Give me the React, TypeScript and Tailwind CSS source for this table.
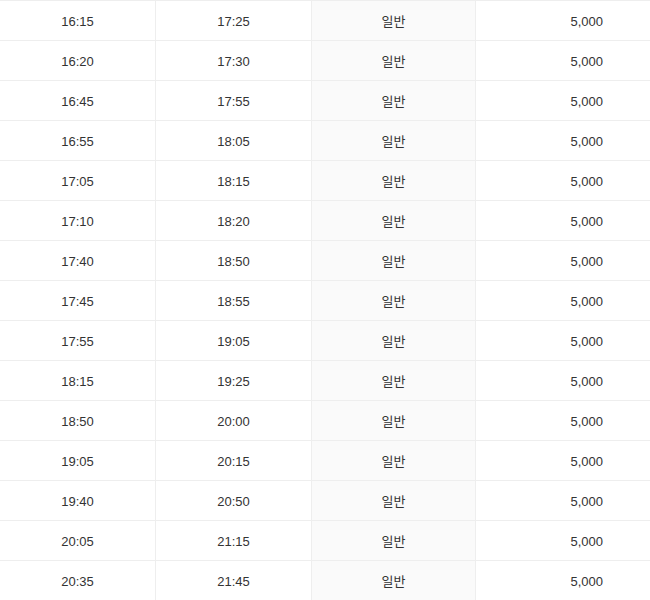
import React from 'react';

const rows = [
    ['16:15', '17:25'],
    ['16:20', '17:30'],
    ['16:45', '17:55'],
    ['16:55', '18:05'],
    ['17:05', '18:15'],
    ['17:10', '18:20'],
    ['17:40', '18:50'],
    ['17:45', '18:55'],
    ['17:55', '19:05'],
    ['18:15', '19:25'],
    ['18:50', '20:00'],
    ['19:05', '20:15'],
    ['19:40', '20:50'],
    ['20:05', '21:15'],
    ['20:35', '21:45'],
];

export default function App() {
    return (
        <div className="w-[650px] h-[600px] overflow-hidden bg-white text-[13px] text-[#333] font-['Liberation_Sans','Noto_Sans_CJK_KR',sans-serif]">
            <div className="border-b border-[#ddd]">
                {rows.map(([dep, arr], i) => (
                    <div key={i} className="grid grid-cols-[155px_156px_164px_175px] h-[40px] border-t border-[#eee]">
                        <div className="flex items-center justify-center pt-[3px]">{dep}</div>
                        <div className="flex items-center justify-center pt-[3px] border-l border-[#eee]">{arr}</div>
                        <div className="flex items-center justify-center pt-[3px] border-l border-[#eee] bg-[#fafafa]">일반</div>
                        <div className="flex items-center justify-end pt-[3px] pr-[47px] border-l border-[#eee]">5,000</div>
                    </div>
                ))}
            </div>
        </div>
    );
}
